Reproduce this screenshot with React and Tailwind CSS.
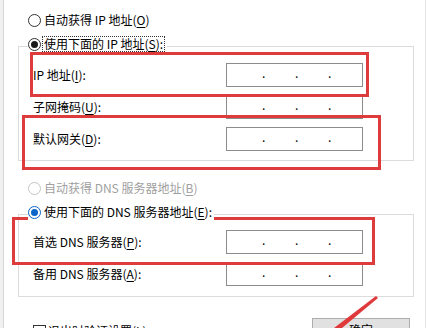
import React from "react";

const Radio = ({ checked = false, disabled = false, hot = false }) => {
  let ring = "border-[#333333]";
  if (disabled) ring = "border-[#c4c4c4]";
  if (hot) ring = "border-[#0a64c8]";
  return (
    <span
      className={
        "flex h-[13px] w-[13px] shrink-0 items-center justify-center rounded-full border bg-white " +
        ring
      }
    >
      {checked && (
        <span
          className={
            hot
              ? "h-[7px] w-[7px] rounded-full bg-[#0a64c8]"
              : "h-[7px] w-[7px] rounded-full bg-[#1a1a1a]"
          }
        />
      )}
    </span>
  );
};

const Key = ({ children }) => <span className="underline underline-offset-2">{children}</span>;

const IpField = () => (
  <div className="flex h-[24px] w-[137px] items-center border border-[#8c8c8c] bg-white pl-[35px] text-[12px] leading-[12px]">
    <span className="relative -top-[2px] w-[33px]">.</span>
    <span className="relative -top-[2px] w-[33px]">.</span>
    <span className="relative -top-[2px] w-[33px]">.</span>
  </div>
);

const FieldRow = ({ label }) => (
  <div className="flex h-[24px] items-center pl-[14px]">
    <span className="w-[193px]">{label}</span>
    <IpField />
  </div>
);

export default function App() {
  return (
    <div className="relative flex h-[328px] w-[428px] overflow-hidden bg-white font-['Noto_Sans_CJK_SC','Liberation_Sans',sans-serif] text-[12px] leading-[16px] text-black">
      <div className="w-[4px] shrink-0 border-r border-[#d6d6d6] bg-[#f0f0f0]" />

      <div className="flex flex-1 flex-col pt-[12px]">
        {/* IP address */}
        <div className="ml-[24px] flex h-[16px] items-center gap-[3px]">
          <Radio />
          <span>
            自动获得 IP 地址(<Key>O</Key>)
          </span>
        </div>

        <div className="relative z-10 -mb-[6px] ml-[24px] mt-[8px] flex h-[16px] w-fit items-center gap-[1px] bg-white pr-[2px]">
          <Radio checked />
          <span className="border border-dotted border-[#333333] px-[1px] leading-[14px]">
            使用下面的 IP 地址(<Key>S</Key>):
          </span>
        </div>

        <div className="ml-[14px] flex w-[396px] flex-col gap-[8px] border border-[#dcdcdc] pb-[9px] pt-[16px]">
          <FieldRow
            label={
              <>
                IP 地址(<Key>I</Key>):
              </>
            }
          />
          <FieldRow
            label={
              <>
                子网掩码(<Key>U</Key>):
              </>
            }
          />
          <FieldRow
            label={
              <>
                默认网关(<Key>D</Key>):
              </>
            }
          />
        </div>

        {/* DNS */}
        <div className="ml-[24px] mt-[19px] flex h-[16px] items-center gap-[3px] text-[#a0a0a0]">
          <Radio disabled />
          <span>
            自动获得 DNS 服务器地址(<Key>B</Key>)
          </span>
        </div>

        <div className="relative z-10 -mb-[6px] ml-[24px] mt-[8px] flex h-[16px] w-fit items-center gap-[3px] bg-white pr-[2px]">
          <Radio checked hot />
          <span>
            使用下面的 DNS 服务器地址(<Key>E</Key>):
          </span>
        </div>

        <div className="ml-[14px] flex w-[396px] flex-col gap-[8px] border border-[#dcdcdc] pb-[10px] pt-[15px]">
          <FieldRow
            label={
              <>
                首选 DNS 服务器(<Key>P</Key>):
              </>
            }
          />
          <FieldRow
            label={
              <>
                备用 DNS 服务器(<Key>A</Key>):
              </>
            }
          />
        </div>

        <div className="flex items-start justify-between pl-[29px] pr-[15px]">
          <div className="mt-[26px] flex items-center gap-[2px]">
            <span className="h-[13px] w-[13px] border border-[#333333] bg-white" />
            <span>
              退出时验证设置(<Key>L</Key>)
            </span>
          </div>
          <button className="mt-[21px] h-[23px] w-[98px] border border-[#adadad] bg-[#e1e1e1]">
            确定
          </button>
        </div>
      </div>

      <div className="w-[3px] shrink-0 border-l border-[#e4e4e4]" />

      {/* red annotations */}
      <div className="absolute left-[30px] top-[52px] h-[45px] w-[339px] border-[3px] border-[#de3b3d]" />
      <div className="absolute left-[22px] top-[115px] h-[55px] w-[359px] border-[3px] border-[#de3b3d]" />
      <div className="absolute left-[12px] top-[217px] h-[48px] w-[363px] border-[3px] border-[#de3b3d]" />
      <svg className="absolute left-0 top-0" width="428" height="328" viewBox="0 0 428 328">
        <polygon points="376,296 378,298 342,328 334,328" fill="#e0393b" />
      </svg>
    </div>
  );
}
